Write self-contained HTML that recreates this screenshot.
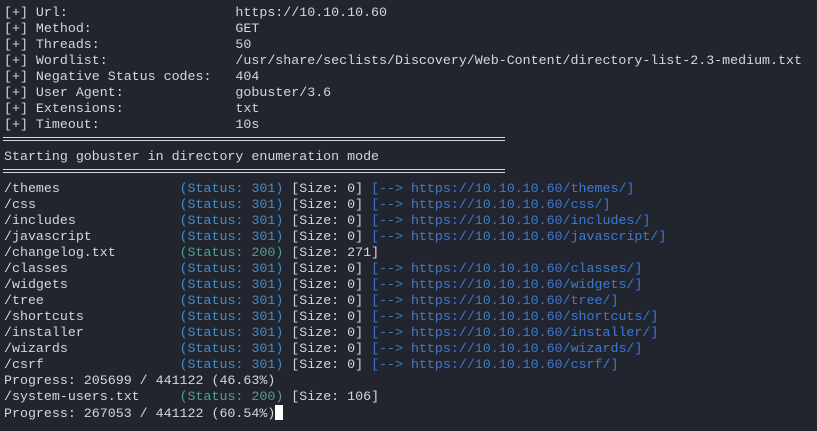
<!DOCTYPE html>
<html><head><style>
body{margin:0;background:#23252e;width:817px;height:431px;overflow:hidden}
pre{margin:0;position:absolute;left:4px;top:5px;font-family:"Liberation Mono",monospace;font-size:13.3px;line-height:16px;color:#d6d6d6;letter-spacing:0}
.s{color:#3a8fd4}.g{color:#4aa38e}.l{color:#3c7ad0}
.d{position:absolute;left:3px;width:502px;height:2px;border-top:1px solid #d6d6d6;border-bottom:1px solid #d6d6d6}
.c{display:inline-block;width:8px;height:15px;background:#fff;vertical-align:-3px}
</style></head><body>
<div class="d" style="top:137px"></div>
<div class="d" style="top:169px"></div>
<pre>[+] Url:                     https://10.10.10.60
[+] Method:                  GET
[+] Threads:                 50
[+] Wordlist:                /usr/share/seclists/Discovery/Web-Content/directory-list-2.3-medium.txt
[+] Negative Status codes:   404
[+] User Agent:              gobuster/3.6
[+] Extensions:              txt
[+] Timeout:                 10s

Starting gobuster in directory enumeration mode

/themes               <span class="s">(Status: 301)</span> [Size: 0] <span class="l">[--&gt; https://10.10.10.60/themes/]</span>
/css                  <span class="s">(Status: 301)</span> [Size: 0] <span class="l">[--&gt; https://10.10.10.60/css/]</span>
/includes             <span class="s">(Status: 301)</span> [Size: 0] <span class="l">[--&gt; https://10.10.10.60/includes/]</span>
/javascript           <span class="s">(Status: 301)</span> [Size: 0] <span class="l">[--&gt; https://10.10.10.60/javascript/]</span>
/changelog.txt        <span class="g">(Status: 200)</span> [Size: 271]
/classes              <span class="s">(Status: 301)</span> [Size: 0] <span class="l">[--&gt; https://10.10.10.60/classes/]</span>
/widgets              <span class="s">(Status: 301)</span> [Size: 0] <span class="l">[--&gt; https://10.10.10.60/widgets/]</span>
/tree                 <span class="s">(Status: 301)</span> [Size: 0] <span class="l">[--&gt; https://10.10.10.60/tree/]</span>
/shortcuts            <span class="s">(Status: 301)</span> [Size: 0] <span class="l">[--&gt; https://10.10.10.60/shortcuts/]</span>
/installer            <span class="s">(Status: 301)</span> [Size: 0] <span class="l">[--&gt; https://10.10.10.60/installer/]</span>
/wizards              <span class="s">(Status: 301)</span> [Size: 0] <span class="l">[--&gt; https://10.10.10.60/wizards/]</span>
/csrf                 <span class="s">(Status: 301)</span> [Size: 0] <span class="l">[--&gt; https://10.10.10.60/csrf/]</span>
Progress: 205699 / 441122 (46.63%)
/system-users.txt     <span class="g">(Status: 200)</span> [Size: 106]
Progress: 267053 / 441122 (60.54%)<span class="c"></span></pre>
</body></html>
